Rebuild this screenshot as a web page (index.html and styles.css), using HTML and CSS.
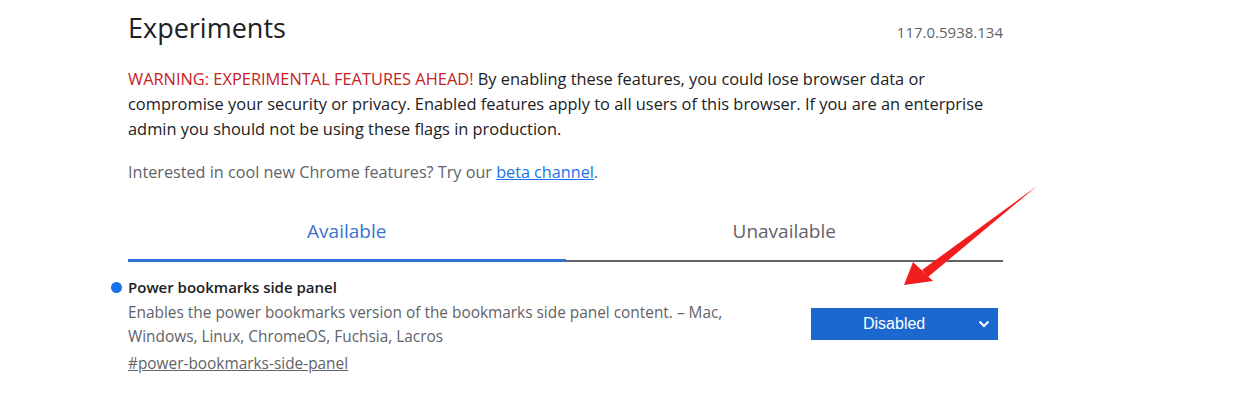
FILE: index.html
```html
<!DOCTYPE html>
<html lang="en">
<head>
    <meta charset="UTF-8">
    <title>Experiments</title>
    <link rel="stylesheet" href="styles.css">
</head>
<body>
    <div class="page">
        <div class="header">
            <h1 class="title">Experiments</h1>
            <span class="version">117.0.5938.134</span>
        </div>
        <p class="blurb"><span class="warning">WARNING: EXPERIMENTAL FEATURES AHEAD!</span> By enabling these features, you could lose browser data or compromise your security or privacy. Enabled features apply to all users of this browser. If you are an enterprise admin you should not be using these flags in production.</p>
        <p class="promo">Interested in cool new Chrome features? Try our <a href="#">beta channel</a>.</p>

        <div class="tabs">
            <div class="tab active">Available</div>
            <div class="tab">Unavailable</div>
        </div>

        <div class="flag">
            <div class="flag-info">
                <div class="flag-name"><span class="dot"></span>Power bookmarks side panel</div>
                <p class="flag-desc">Enables the power bookmarks version of the bookmarks side panel content. – Mac, Windows, Linux, ChromeOS, Fuchsia, Lacros</p>
                <a class="flag-link" href="#">#power-bookmarks-side-panel</a>
            </div>
            <div class="select">
                <span>Disabled</span>
                <svg class="chevron" width="12" height="8" viewBox="0 0 12 8"><path d="M1.5 1.5 L6 6 L10.5 1.5" fill="none" stroke="#fff" stroke-width="2"/></svg>
            </div>
        </div>
    </div>

    <svg class="arrow" width="140" height="110" viewBox="0 0 140 110">
        <path d="M137 0 L22 84 L28 91 Z" fill="#f21d1d"/>
        <path d="M4 99 L13 76 L33 95 Z" fill="#f21d1d"/>
    </svg>
</body>
</html>
```

FILE: styles.css
```css
body {
    margin: 0;
    font-family: "Open Sans", "Noto Sans", sans-serif;
    color: #202124;
    background: #fff;
}
.page {
    width: 875px;
    margin-left: 128px;
}
.header {
    display: flex;
    justify-content: space-between;
    align-items: baseline;
    padding-top: 8px;
}
.title {
    margin: 0;
    font-size: 27px;
    font-weight: 400;
    line-height: 40px;
}
.version {
    font-size: 15px;
    color: #5f6368;
}
.blurb {
    margin: 18px 0 0;
    font-size: 16.4px;
    line-height: 25px;
}
.warning {
    color: #c5221f;
}
.promo {
    margin: 19px 0 0;
    font-size: 16.2px;
    line-height: 25px;
    color: #5f6368;
}
.promo a {
    color: #1a73e8;
}
.tabs {
    display: flex;
    margin-top: 32px;
    border-bottom: 2px solid #5f6368;
}
.tab {
    flex: 1;
    text-align: center;
    font-size: 19px;
    line-height: 28px;
    padding-bottom: 15px;
    color: #5f6368;
}
.tab.active {
    color: #3a73d0;
    border-bottom: 3px solid #2f73d1;
    margin-bottom: -2px;
    padding-bottom: 14px;
}
.flag {
    display: flex;
    justify-content: space-between;
    align-items: flex-start;
    margin-top: 14px;
    padding-right: 5px;
}
.flag-info {
    width: 610px;
}
.flag-name {
    position: relative;
    font-size: 15px;
    font-weight: 600;
    line-height: 22px;
}
.dot {
    position: absolute;
    left: -17px;
    top: 6px;
    width: 11px;
    height: 11px;
    border-radius: 50%;
    background: #1a73e8;
}
.flag-desc {
    margin: 3px 0 0;
    font-size: 15.4px;
    line-height: 24px;
    color: #5f6368;
}
.flag-link {
    display: inline-block;
    margin-top: 3px;
    font-size: 15.4px;
    line-height: 24px;
    color: #5f6368;
}
.select {
    display: flex;
    align-items: center;
    justify-content: space-between;
    width: 187px;
    height: 32px;
    margin-top: 32px;
    box-sizing: border-box;
    padding: 0 8px 0 52px;
    background: #1a68d0;
    color: #fff;
    font-family: "Liberation Sans", Arial, sans-serif;
    font-size: 16px;
}
.arrow {
    position: absolute;
    left: 900px;
    top: 186px;
}
```
